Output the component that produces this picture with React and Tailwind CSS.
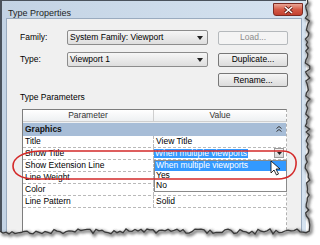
import React from 'react'

// deterministic jitter for the torn paper edge
const makeRand = (seed) => () => {
    seed = (seed * 9301 + 49297) % 233280
    return seed / 233280
}

const tornEdge = () => {
    const r = makeRand(7)
    const pts = []
    for (let y = 0; y <= 231; y += 3) pts.push([305 + r() * 5, y])
    for (let x = 306; x >= 0; x -= 3) pts.push([x, 229 + r() * 5])
    return pts
}

const Combo = ({ text }) => (
    <div className="flex items-center justify-between w-[141px] h-[15px] px-[2px] border border-[#8c8c8c] rounded-[2px] bg-gradient-to-b from-[#f6f6f6] to-[#dedede]">
        <span>{text}</span>
        <svg width="6" height="4" viewBox="0 0 6 4" className="mr-[2px]"><path d="M0 0 L6 0 L3 4 Z" fill="#222" /></svg>
    </div>
)

const Button = ({ label, disabled }) => (
    <div className={disabled
        ? 'flex items-center justify-center w-[70px] h-[14px] border border-[#b5b9bc] rounded-[2px] bg-[#f4f4f4] text-[#8b8b8b]'
        : 'flex items-center justify-center w-[70px] h-[14px] border border-[#777] rounded-[2px] bg-gradient-to-b from-[#f5f5f5] to-[#dcdcdc]'}>
        {label}
    </div>
)

const rows = [
    ['Title', 'View Title'],
    ['Show Title', null],
    ['Show Extension Line', ''],
    ['Line Weight', ''],
    ['Color', ''],
    ['Line Pattern', 'Solid'],
]

export default function App() {
    const pts = tornEdge()
    const edge = pts.map((p, i) => `${i ? 'L' : 'M'}${p[0].toFixed(1)} ${p[1].toFixed(1)}`).join(' ')
    const cover = `M320 0 ${pts.map(p => `L${p[0].toFixed(1)} ${p[1].toFixed(1)}`).join(' ')} L0 245 L320 245 Z`

    return (
        <div className="relative w-[320px] h-[245px] overflow-hidden bg-white font-['Liberation_Sans',Arial,sans-serif] text-[8.5px] leading-none text-black">
            <div className="flex flex-col w-[306px] h-[236px] border-l-2 border-t border-[#4a525c] bg-gradient-to-r from-[#c3d3e4] to-[#d6e3f0]">
                <div className="flex items-start justify-between h-[17px]">
                    <span className="pl-[6px] pt-[8px] text-[9px] text-[#1e1e1e]">Type Properties</span>
                    <div className="flex items-center justify-center mt-[2px] mr-[3px] w-[30px] h-[13px] border border-[#7b2a22] rounded-b-[3px] bg-gradient-to-b from-[#e9a696] via-[#d45a47] to-[#c2402f]">
                        <svg width="9" height="8" viewBox="0 0 9 8">
                            <path d="M1 1 L8 7 M8 1 L1 7" stroke="#5a1a14" strokeWidth="3" />
                            <path d="M1 1 L8 7 M8 1 L1 7" stroke="#fff" strokeWidth="1.6" />
                        </svg>
                    </div>
                </div>

                <div className="flex flex-col flex-1 ml-[4px] mr-[4px] border border-[#9aabbf] bg-[#f0f0f0]">
                    <div className="flex items-center mt-[11px] pl-[13px]">
                        <span className="w-[47px]">Family:</span>
                        <Combo text="System Family: Viewport" />
                        <div className="ml-[10px]"><Button label="Load..." disabled /></div>
                    </div>
                    <div className="flex items-center mt-[7px] pl-[13px]">
                        <span className="w-[47px]">Type:</span>
                        <Combo text="Viewport 1" />
                        <div className="ml-[10px]"><Button label="Duplicate..." /></div>
                    </div>
                    <div className="flex mt-[6px] pl-[211px]">
                        <Button label="Rename..." />
                    </div>

                    <div className="mt-[6px] pl-[13px]">Type Parameters</div>

                    <div className="relative flex flex-col flex-1 w-[265px] mt-[7px] ml-[15px] border border-[#7d7d7d] [border-right-style:dashed] border-r-[#b0b0b0] bg-white">
                        <div className="grid grid-cols-[131px_1fr] h-[12px] border-b border-[#cfcfcf] bg-gradient-to-b from-white to-[#eef0f2] text-[#333]">
                            <div className="flex items-center justify-center border-r border-[#cfcfcf]">Parameter</div>
                            <div className="flex items-center justify-center">Value</div>
                        </div>
                        <div className="h-[1px] bg-[#eef0f2]" />
                        <div className="flex items-center justify-between h-[13px] pl-[2px] pr-[4px] bg-[#a7bdd7] font-bold text-[#111]">
                            <span>Graphics</span>
                            <svg width="6" height="6" viewBox="0 0 6 6"><path d="M0.5 2.5 L3 0.5 L5.5 2.5 M0.5 5.5 L3 3.5 L5.5 5.5" stroke="#333" strokeWidth="1" fill="none" /></svg>
                        </div>
                        {rows.map(([p, v]) => (
                            <div key={p} className="grid grid-cols-[131px_1fr] h-[12px] border-b border-dashed border-[#b9b9b9]">
                                <div className="flex items-center pl-[2px] border-r border-dashed border-[#b9b9b9]">{p}</div>
                                {v === null ? (
                                    <div className="flex items-center justify-between pr-[2px]">
                                        <span className="flex items-center h-[9px] px-[1px] bg-[#3399ff] text-white">When multiple viewports</span>
                                        <span className="flex items-center justify-center w-[10px] h-[10px] border border-[#9a9a9a] bg-gradient-to-b from-[#f4f4f4] to-[#d8d8d8]">
                                            <svg width="5" height="3" viewBox="0 0 5 3"><path d="M0 0 L5 0 L2.5 3 Z" fill="#222" /></svg>
                                        </span>
                                    </div>
                                ) : (
                                    <div className="flex items-center pl-[2px]">{v}</div>
                                )}
                            </div>
                        ))}

                        <div className="absolute left-[131px] top-[50px] w-[133px] flex flex-col border border-[#8a8a8a] bg-white">
                            <div className="flex items-center h-[10px] pl-[1px] bg-[#3399ff] text-white">When multiple viewports</div>
                            <div className="flex items-center h-[10px] pl-[1px]">Yes</div>
                            <div className="flex items-center h-[10px] pl-[1px]">No</div>
                        </div>
                    </div>
                </div>
            </div>

            <svg className="absolute inset-0 pointer-events-none" width="320" height="245" viewBox="0 0 320 245">
                <defs>
                    <filter id="blur" x="-10%" y="-10%" width="120%" height="120%">
                        <feGaussianBlur stdDeviation="1.4" />
                    </filter>
                </defs>
                <path d="M40 151 L282 151 C292 151 297 157 296 165 C295 174 288 179 278 179 L35 179 C20 179 13 173 13 166 C13 158 22 152 40 151 Z" fill="none" stroke="#d42a2a" strokeWidth="1.6" />
                <path d="M271 161 L271 173 L274 170 L276.5 175 L278.5 174 L276 169 L280 169 Z" fill="#fff" stroke="#000" strokeWidth="0.8" strokeLinejoin="round" />
                <path d={cover} fill="#fff" />
                <path d={edge} fill="none" stroke="#555" strokeWidth="3" transform="translate(1.5 1.5)" filter="url(#blur)" opacity="0.8" />
                <path d={edge} fill="none" stroke="#3a3a3a" strokeWidth="1.3" />
            </svg>
        </div>
    )
}
